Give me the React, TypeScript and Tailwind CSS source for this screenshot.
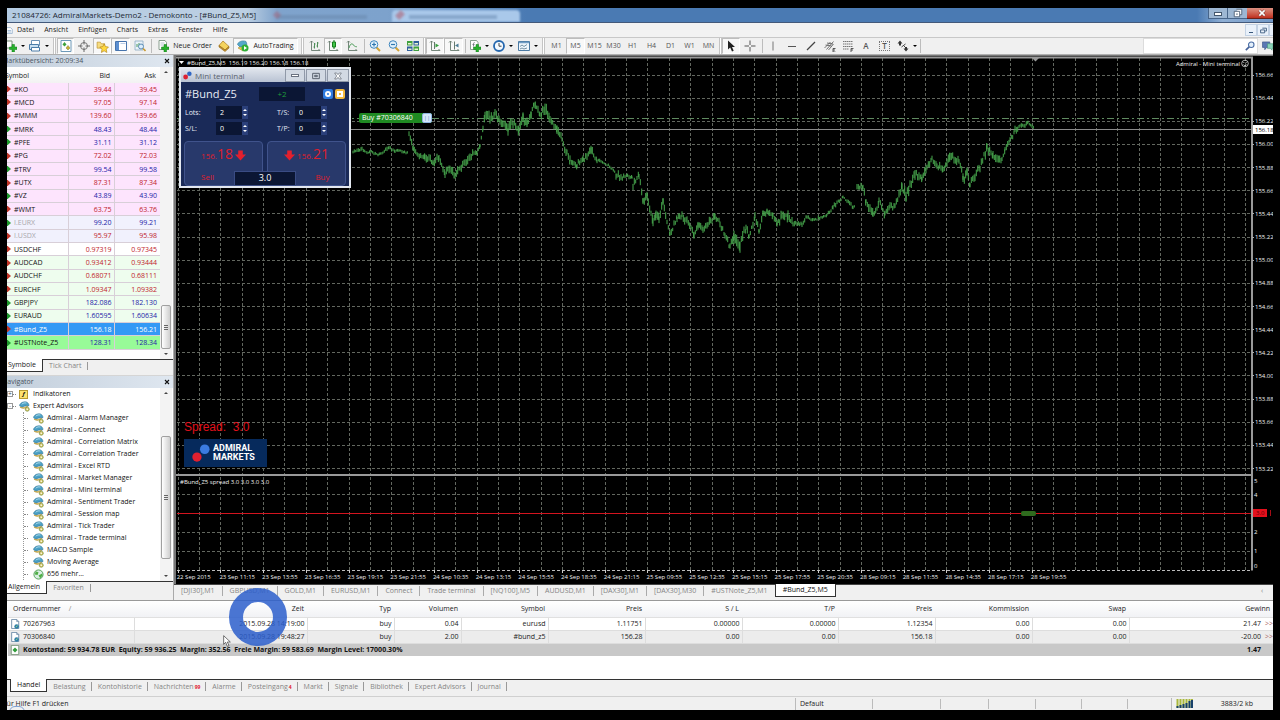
import type { ReactNode } from "react";
import clsx from "clsx";

type Quote = { name: string; bid: string; ask: string; up: boolean; bg: string; dim?: boolean };

const pink = "bg-[#fde4fd]";
const lilac = "bg-[#f1f1fd]";
const mint = "bg-[#eefdee]";

const quotes: Quote[] = [
	{ name: "#KO", bid: "39.44", ask: "39.45", up: false, bg: pink },
	{ name: "#MCD", bid: "97.05", ask: "97.14", up: false, bg: pink },
	{ name: "#MMM", bid: "139.60", ask: "139.66", up: false, bg: pink },
	{ name: "#MRK", bid: "48.43", ask: "48.44", up: true, bg: pink },
	{ name: "#PFE", bid: "31.11", ask: "31.12", up: true, bg: pink },
	{ name: "#PG", bid: "72.02", ask: "72.03", up: false, bg: pink },
	{ name: "#TRV", bid: "99.54", ask: "99.58", up: true, bg: pink },
	{ name: "#UTX", bid: "87.31", ask: "87.34", up: false, bg: pink },
	{ name: "#VZ", bid: "43.89", ask: "43.90", up: true, bg: pink },
	{ name: "#WMT", bid: "63.75", ask: "63.76", up: false, bg: pink },
	{ name: "I.EURX", bid: "99.20", ask: "99.21", up: true, bg: lilac, dim: true },
	{ name: "I.USDX", bid: "95.97", ask: "95.98", up: false, bg: lilac, dim: true },
	{ name: "USDCHF", bid: "0.97319", ask: "0.97345", up: false, bg: "bg-white" },
	{ name: "AUDCAD", bid: "0.93412", ask: "0.93444", up: false, bg: mint },
	{ name: "AUDCHF", bid: "0.68071", ask: "0.68111", up: false, bg: mint },
	{ name: "EURCHF", bid: "1.09347", ask: "1.09382", up: false, bg: mint },
	{ name: "GBPJPY", bid: "182.086", ask: "182.130", up: true, bg: mint },
	{ name: "EURAUD", bid: "1.60595", ask: "1.60634", up: true, bg: mint },
	{ name: "#Bund_Z5", bid: "156.18", ask: "156.21", up: false, bg: "bg-[#3399f5]" },
	{ name: "#USTNote_Z5", bid: "128.31", ask: "128.34", up: true, bg: "bg-[#98fb98]" },
];

const advisors = [
	"Admiral - Alarm Manager",
	"Admiral - Connect",
	"Admiral - Correlation Matrix",
	"Admiral - Correlation Trader",
	"Admiral - Excel RTD",
	"Admiral - Market Manager",
	"Admiral - Mini terminal",
	"Admiral - Sentiment Trader",
	"Admiral - Session map",
	"Admiral - Tick Trader",
	"Admiral - Trade terminal",
	"MACD Sample",
	"Moving Average",
];

const chartTabs = [
	"[DJI30],M1",
	"GBPUSD,M1",
	"GOLD,M1",
	"EURUSD,M1",
	"Connect",
	"Trade terminal",
	"[NQ100],M5",
	"AUDUSD,M1",
	"[DAX30],M1",
	"[DAX30],M30",
	"#USTNote_Z5,M1",
];

const terminalTabs = [
	{ label: "Belastung" },
	{ label: "Kontohistorie" },
	{ label: "Nachrichten", count: "99" },
	{ label: "Alarme" },
	{ label: "Posteingang", count: "4" },
	{ label: "Markt" },
	{ label: "Signale" },
	{ label: "Bibliothek" },
	{ label: "Expert Advisors" },
	{ label: "Journal" },
];

const orderCols = [
	{ label: "Ordernummer", w: "w-[126px]" },
	{ label: "Zeit", w: "w-[173px]" },
	{ label: "Typ", w: "w-[87px]" },
	{ label: "Volumen", w: "w-[67px]" },
	{ label: "Symbol", w: "w-[87px]" },
	{ label: "Preis", w: "w-[97px]" },
	{ label: "S / L", w: "w-[97px]" },
	{ label: "T/P", w: "w-[96px]" },
	{ label: "Preis", w: "w-[97px]" },
	{ label: "Kommission", w: "w-[97px]" },
	{ label: "Swap", w: "w-[97px]" },
	{ label: "Gewinn", w: "" },
];

const orders = [
	["70267963", "2015.09.28 14:19:00", "buy", "0.04", "eurusd", "1.11751", "0.00000", "0.00000", "1.12354", "0.00", "0.00", "21.47"],
	["70306840", "2015.09.28 19:48:27", "buy", "2.00", "#bund_z5", "156.28", "0.00", "0.00", "156.18", "0.00", "0.00", "-20.00"],
];

const prices = [
	"156.66", "156.44", "156.22", "156.00", "155.88", "155.66", "155.44", "155.22", "155.00",
	"154.88", "154.66", "154.44", "154.22", "154.00", "153.88", "153.66", "153.44", "153.22",
];

const dates = [
	"22 Sep 2015", "23 Sep 11:15", "23 Sep 13:55", "23 Sep 16:35", "23 Sep 19:15", "23 Sep 21:55",
	"24 Sep 10:35", "24 Sep 13:15", "24 Sep 15:55", "24 Sep 18:35", "24 Sep 21:15",
	"25 Sep 09:55", "25 Sep 12:35", "25 Sep 15:15", "25 Sep 17:55", "25 Sep 20:35",
	"28 Sep 09:15", "28 Sep 11:55", "28 Sep 14:35", "28 Sep 17:15", "28 Sep 19:55",
];

// [x, y, spread] turning points, one list for each trading session
const sessions: number[][][] = [
	[[353, 152, 2], [362, 149, 3], [367, 153, 2], [370, 151, 2], [378, 155, 2], [383, 153, 2], [389, 147, 3], [395, 152, 2], [398, 150, 2], [408, 153, 2]],
	[
		[409, 134, 3], [413, 146, 4], [418, 155, 4], [425, 157, 5], [433, 163, 5], [439, 158, 5], [445, 173, 5], [450, 168, 5], [455, 176, 5], [460, 168, 5],
		[465, 164, 5], [470, 156, 5], [477, 153, 3], [480, 145, 3], [483, 128, 3], [485, 114, 6], [490, 118, 6], [495, 113, 6], [500, 122, 5], [508, 129, 6],
		[513, 123, 6], [519, 132, 6], [523, 117, 7], [527, 123, 6], [531, 112, 6], [534, 104, 5], [540, 116, 5], [545, 108, 7], [550, 119, 6], [557, 130, 5],
		[562, 140, 5], [567, 153, 5], [570, 161, 5], [577, 165, 4], [583, 160, 4], [591, 150, 5], [597, 160, 3], [603, 162, 2], [612, 168, 2], [617, 176, 5],
		[632, 177, 2], [633, 184, 5], [639, 175, 4], [643, 202, 5], [647, 195, 5], [653, 223, 6], [656, 213, 6], [659, 218, 6], [663, 202, 5], [670, 234, 5],
		[677, 219, 4], [682, 215, 5], [687, 221, 5], [694, 234, 5], [698, 226, 5], [703, 232, 5], [708, 223, 5], [715, 216, 4], [720, 223, 4], [725, 235, 4],
		[730, 247, 5], [734, 237, 7], [740, 244, 8], [746, 227, 5], [749, 236, 4], [755, 217, 4], [759, 231, 4], [763, 215, 5], [767, 211, 4], [773, 214, 5],
		[777, 225, 4], [782, 215, 6], [788, 217, 6], [793, 222, 4], [802, 224, 3], [807, 217, 3], [813, 220, 2], [827, 215, 2], [833, 207, 3], [843, 197, 2],
		[853, 207, 3], [855, 204, 2],
	],
	[
		[857, 188, 5], [863, 187, 5], [866, 202, 5], [873, 215, 5], [879, 202, 5], [885, 214, 5], [890, 205, 5], [895, 207, 4], [902, 187, 6], [906, 196, 6],
		[915, 175, 6], [922, 177, 5], [927, 165, 5], [932, 158, 4], [937, 165, 4], [943, 170, 4], [950, 155, 6], [959, 162, 4], [963, 178, 6], [967, 174, 6],
		[970, 185, 5], [975, 176, 6], [980, 167, 5], [987, 148, 6], [993, 157, 5], [1002, 161, 4], [1005, 150, 4], [1010, 141, 4], [1015, 130, 5], [1020, 125, 3],
		[1025, 126, 3], [1028, 122, 2], [1034, 128, 2],
	],
];

const rand = (n: number) => {
	const v = Math.sin(n * 12.9898) * 43758.5453;
	return v - Math.floor(v);
};

function barPath(points: number[][]) {
	let d = "";
	for (let i = 0; i < points.length - 1; i++) {
		const [x0, y0, s0] = points[i];
		const [x1, y1, s1] = points[i + 1];
		for (let x = x0; x < x1; x += 1.33) {
			const t = (x - x0) / (x1 - x0);
			const s = s0 + (s1 - s0) * t;
			const mid = y0 + (y1 - y0) * t + (rand(x) - 0.5) * s * 0.9;
			const top = mid - s * (0.3 + rand(x + 7) * 0.6);
			const bottom = mid + s * (0.3 + rand(x + 3) * 0.6);
			d += `M${x.toFixed(1)} ${top.toFixed(1)}V${bottom.toFixed(1)}`;
		}
	}
	return d;
}

const colX = (i: number) => 177.7 + i * 21.353;
const rowY = (i: number) => 75 + i * 23.15;

function Svg({ children, className = "size-3" }: { children: ReactNode; className?: string }) {
	return (
		<svg viewBox="0 0 12 12" fill="none" className={clsx("shrink-0", className)} aria-hidden="true">
			{children}
		</svg>
	);
}

function Plus() {
	return <path d="M7 4.5h2.5V7H12v2.5H9.5V12H7V9.5H4.5V7H7z" fill="#27b12b" stroke="#10791a" strokeWidth=".5" />;
}

function Axes() {
	return <path d="M2.5 1v9.500h8.500M1 2.500l1.500-1.500L4 2.500M9.500 9l1.500 1.500" stroke="#667b6d" strokeWidth=".9" />;
}

function AdvisorIcon() {
	return (
		<Svg className="size-[11px]">
			<path d="M1 6.500C3 9 8 8.500 10 5L6 7z" fill="#e7c54a" stroke="#a5802a" strokeWidth=".5" />
			<path d="M.5 4.500C2 1 7 0 9 1.500s2 3 1.500 4C8 4.500 5 6 3.500 6.500 2 6 .5 5.500.5 4.500z" fill="#4a9fc4" stroke="#2b7196" strokeWidth=".6" />
			<path d="M3 3.500C4.500 2 6.500 1.700 8 2.300" stroke="#b8e2f1" />
			<circle cx="9" cy="9" r="2.200" fill="#d9c768" stroke="#6f8a3a" strokeWidth=".7" />
			<circle cx="9" cy="9" r=".8" fill="#fff" />
		</Svg>
	);
}

function DocIcon() {
	return (
		<Svg className="size-2.5">
			<path d="M2 .5h6l2.500 2.500v8.500H2z" fill="#fff" stroke="#5f7f9f" />
			<path d="M8 .5V3h2.500" stroke="#5f7f9f" strokeWidth=".8" />
			<circle cx="8" cy="9" r="2.800" fill="#2f7ea8" />
			<path d="M7 9.500L9 8" stroke="#a8e07b" />
		</Svg>
	);
}

function ToolButton({ label, width = "w-[18px]", active, menu, children }: { label: string; width?: string; active?: boolean; menu?: boolean; children: ReactNode }) {
	return (
		<button
			aria-label={label}
			className={clsx("flex h-4 shrink-0 items-center justify-center gap-1 whitespace-nowrap", width, active && "border border-[#bdbdbd] border-r-white border-b-white bg-[#f8f8f8]")}
		>
			{children}
			{menu && <span className="size-0 border-x-2 border-t-2 border-x-transparent border-t-black" />}
		</button>
	);
}

function Sep({ width = "w-1" }: { width?: string }) {
	return (
		<span className={clsx("flex h-3.5 shrink-0 justify-center", width)}>
			<span className="border-l border-[#bcbcbc]" />
		</span>
	);
}

function Grip({ width = "w-1.5" }: { width?: string }) {
	return (
		<span className={clsx("flex h-4 shrink-0 justify-center", width)}>
			<span className="w-[3px] border-x border-[#c4c4c4] bg-white" />
		</span>
	);
}

function TitleBar() {
	return (
		<header className="relative flex h-3.5 shrink-0 items-center overflow-hidden bg-[linear-gradient(90deg,#b4cbe2_0px,#bccfe2_240px,#7fa3cc_270px,#7da2cc_380px,#4a7ab3_520px,#4a7ab3_94%,#8fafd4_96%,#6f97c6_100%)]">
			<div className="absolute left-[385px] top-0.5 h-3 w-[128px] rounded-t bg-[#a9c8ea] blur-[1px]" />
			<div className="absolute left-[402px] top-[7px] h-1 w-[88px] bg-[#7292b8] opacity-60 blur-[1px]" />
			<div className="absolute left-[270px] top-[7px] h-1 w-[90px] bg-[#6886aa] opacity-50 blur-[1px]" />
			<div className="absolute left-[389px] top-[4px] h-1.5 w-2 -rotate-45 bg-[#b0505f] opacity-50 blur-[1px]" />
			<div className="absolute left-[267px] top-[4px] h-1.5 w-1.5 -rotate-45 bg-[#b0505f] opacity-40 blur-[1px]" />
			<h1 className="relative pl-[5px] text-[8px] leading-[14px] text-[#1c2733]">21084726: AdmiralMarkets-Demo2 - Demokonto - [#Bund_Z5,M5]</h1>
			<div className="relative ml-auto flex h-[11px] self-start">
				<button aria-label="Minimieren" className="flex w-5 items-end justify-center border border-t-0 border-[#47658a] bg-[#9db7d3] pb-0.5">
					<span className="h-1 w-2 border border-[#44576d] bg-white" />
				</button>
				<button aria-label="Verkleinern" className="flex w-[19px] items-center justify-center border-b border-[#47658a] bg-[#9db7d3]">
					<Svg className="size-2.5">
						<path d="M4 1.500h6.500V8H8.500M1.500 4h6.500v6.500H1.500z" fill="#fff" stroke="#44576d" />
						<path d="M4 6.500h1.500V8H4z" fill="#44576d" />
					</Svg>
				</button>
				<button aria-label="Schließen" className="flex w-[26px] items-center justify-center border-b border-[#6b2219] bg-linear-to-b from-[#dc9081] to-[#be2c1c] pl-1">
					<Svg className="size-2">
						<path d="M2 2l8 8M10 2l-8 8" stroke="#6a2a25" strokeWidth="4" />
						<path d="M2 2l8 8M10 2l-8 8" stroke="#fff" strokeWidth="2.500" />
					</Svg>
				</button>
			</div>
		</header>
	);
}

function MenuBar() {
	return (
		<nav className="flex h-[15px] shrink-0 items-center gap-2.5 border-t border-[#43597a] bg-[#f2f2f2]">
			<Svg className="-mr-[7px] size-[7px]">
				<path d="M0 1h6l3 3v7H0" stroke="#6c94bd" fill="#fff" />
				<path d="M1 6h6M1 8.500h6" stroke="#6c94bd" />
			</Svg>
			{["Datei", "Ansicht", "Einfügen", "Charts", "Extras", "Fenster", "Hilfe"].map((m) => (
				<button key={m} className="leading-[14px]">
					{m}
				</button>
			))}
			<div className="ml-auto flex h-3">
				<button aria-label="Fenster minimieren" className="flex w-3 items-end justify-center border border-[#c3d2e4] bg-[#e9f1fa] pb-0.5">
					<span className="w-1 border-b border-[#38587c]" />
				</button>
				<button aria-label="Fenster verkleinern" className="flex w-3 items-center justify-center border border-[#c3d2e4] bg-[#e9f1fa]">
					<Svg className="size-[7px]">
						<path d="M4 2h7v5H9M1 5h7v5H1z" stroke="#38587c" strokeWidth="1.500" />
					</Svg>
				</button>
				<span className="w-1 border border-r-0 border-[#c3d2e4] bg-[#e9f1fa]" />
			</div>
		</nav>
	);
}

function ToolBar() {
	return (
		<div className="flex h-[18px] shrink-0 items-center overflow-hidden border-y border-t-[#c8c8c8] border-b-[#b0b0b0] bg-[#f0f0f0]">
			<ToolButton label="Neuer Chart" width="w-5" menu>
				<Svg className="-ml-1 size-3">
					<path d="M1 1h6v7H1z" fill="#fff" stroke="#7a8f7a" />
					<Plus />
				</Svg>
			</ToolButton>
			<ToolButton label="Profile" width="w-6" menu>
				<Svg>
					<path d="M2.500.5h8v5h-8z" fill="#fff" stroke="#6d93b6" />
					<path d="M.5 4.500h9v5h-9z" fill="#c9e0f1" stroke="#4c7da8" />
					<path d="M2.500 7.500h8v3.500h-8z" fill="#fff" stroke="#4c7da8" />
				</Svg>
			</ToolButton>
			<Grip />
			<ToolButton label="Marktübersicht" width="w-[17px]" active>
				<Svg>
					<path d="M1 .5h10v11H1z" fill="#fff" stroke="#6e9ab9" />
					<path d="M2.500 4.500L4.500 2l2 2.500-2 2z" fill="#3ca23c" />
					<path d="M6 8l2-2.500L10 8l-2 2z" fill="#d0aa33" stroke="#6d8a3c" strokeWidth=".5" />
				</Svg>
			</ToolButton>
			<ToolButton label="Datenfenster" width="w-[19px]">
				<Svg>
					<circle cx="6" cy="6" r="3.500" stroke="#777" />
					<path d="M6 0v4.500M6 7.500V12M0 6h4.500M7.500 6H12" stroke="#666" />
				</Svg>
			</ToolButton>
			<ToolButton label="Navigator" active>
				<Svg className="size-[13px]">
					<path d="M1 2h3l1 1.500h3v4H1z" fill="#f6dc80" stroke="#b98e28" strokeWidth=".6" />
					<path d="M7.500 3.500l1.200 2.600 2.800.4-2 2 .5 3-2.500-1.500L5 11.500l.5-3-2-2 2.800-.4z" fill="#ffd93f" stroke="#b1841c" strokeWidth=".6" />
				</Svg>
			</ToolButton>
			<ToolButton label="Terminal" width="w-[19px]" active>
				<Svg>
					<path d="M.5 1.500h11v9H.5z" fill="#fff" stroke="#4774ad" />
					<path d="M1 2h3v8H1z" fill="#5d8fd0" />
					<path d="M5.500 3.500h5" stroke="#b9cde6" />
				</Svg>
			</ToolButton>
			<ToolButton label="Strategie Tester" width="w-[19px]">
				<Svg>
					<path d="M1 1h8v9H1z" fill="#e9f2f9" stroke="#8cabc3" strokeWidth=".8" />
					<path d="M3 4v3M5 3v4" stroke="#4f9d5c" />
					<circle cx="7" cy="6.500" r="2.500" fill="#dcedfb" stroke="#5c8db6" />
					<path d="M9 8.500l2.500 2.500" stroke="#c89a32" strokeWidth="1.600" />
				</Svg>
			</ToolButton>
			<Sep width="w-[5px]" />
			<ToolButton label="Neue Order" width="w-[61px]">
				<Svg>
					<path d="M2 .5h6l1.500 2v7H2z" fill="#fff" stroke="#6f8a76" strokeWidth=".8" />
					<path d="M3.500 3h4M3.500 5h3" stroke="#9ab" strokeWidth=".7" />
					<Plus />
				</Svg>
				<span>Neue Order</span>
			</ToolButton>
			<ToolButton label="MetaEditor">
				<Svg>
					<path d="M1 5.500L5 1l6 5.500L7 10z" fill="#f4d35e" stroke="#a8791d" strokeWidth=".7" />
					<path d="M1 5.500v1.500l6 4.500 4-3.500V6.500L7 10z" fill="#c9962c" stroke="#8f6416" strokeWidth=".6" />
				</Svg>
			</ToolButton>
			<ToolButton label="AutoTrading" width="w-[65px]" active>
				<Svg>
					<path d="M1 8l5 3 5-4-4-3z" fill="#eac84d" stroke="#9e7a25" strokeWidth=".5" />
					<path d="M.5 4.500C1 1.500 6 0 9 1.500l1 3L3 7z" fill="#55a8c9" stroke="#2f7798" strokeWidth=".6" />
					<circle cx="8" cy="8" r="3.500" fill="#2db035" />
					<path d="M7 6v4l3-2z" fill="#fff" />
				</Svg>
				<span>AutoTrading</span>
			</ToolButton>
			<Grip width="w-2" />
			<ToolButton label="Balken">
				<Svg>
					<Axes />
					<path d="M5.500 3v5.500M4.500 7h1M5.500 4h1M8.500 2v5.500M7.500 6h1M8.500 3h1" stroke="#4f8f5a" />
				</Svg>
			</ToolButton>
			<ToolButton label="Kerzen" active>
				<Svg>
					<Axes />
					<path d="M7 0v9" stroke="#157d1c" />
					<path d="M5.500 2h3v5h-3z" fill="#43c649" stroke="#157d1c" />
				</Svg>
			</ToolButton>
			<ToolButton label="Linie" width="w-5">
				<Svg>
					<Axes />
					<path d="M3 8c1-4 3-5.500 4.500-3S10 6 11 7" stroke="#4f9d5c" />
				</Svg>
			</ToolButton>
			<Sep />
			<ToolButton label="Vergrößern">
				<Svg>
					<path d="M7.500 7.500l3.500 3.500" stroke="#d2a336" strokeWidth="2" />
					<circle cx="5" cy="4.500" r="3.800" fill="#dff0fb" stroke="#3f86bd" />
					<path d="M3 4.500h4M5 2.500v4" stroke="#2f77b0" strokeWidth="1.200" />
				</Svg>
			</ToolButton>
			<ToolButton label="Verkleinern" width="w-[19px]">
				<Svg>
					<path d="M7.500 7.500l3.500 3.500" stroke="#d2a336" strokeWidth="2" />
					<circle cx="5" cy="4.500" r="3.800" fill="#dff0fb" stroke="#3f86bd" />
					<path d="M3 4.500h4" stroke="#2f77b0" strokeWidth="1.200" />
				</Svg>
			</ToolButton>
			<ToolButton label="Fenster anordnen" width="w-[19px]">
				<Svg>
					<path d="M0 1h5.500v4.500H0zM6.500 6.500H12V11H6.500z" fill="#3fa03f" />
					<path d="M6.500 1H12v4.500H6.500zM0 6.500h5.500V11H0z" fill="#2e5f9b" />
					<path d="M1 3h3.500v1.500H1zM7.500 3H11v1.500H7.500zM1 8.500h3.500V10H1zM7.500 8.500H11V10H7.500z" fill="#e8f4d0" />
				</Svg>
			</ToolButton>
			<Grip width="w-1" />
			<ToolButton label="Automatisch scrollen" active>
				<Svg>
					<Axes />
					<path d="M5.500 2v7" stroke="#667b6d" />
					<path d="M6.500 3.500L10 5.500l-3.500 2z" fill="#36a13d" />
				</Svg>
			</ToolButton>
			<ToolButton label="Chart verschieben" width="w-[19px]" active>
				<Svg>
					<Axes />
					<path d="M6.500 1.500v8" stroke="#667b6d" />
					<path d="M10.500 3.500L7 5.500l3.500 2z" fill="#4b7d95" />
				</Svg>
			</ToolButton>
			<Sep />
			<ToolButton label="Indikatoren" width="w-[23px]" menu>
				<Svg>
					<path d="M1.500.5h6l1.500 2v7H1.500z" fill="#fff" stroke="#6f8a76" strokeWidth=".8" />
					<path d="M5.500 2.500c-1 0-1 1-1 4M3.500 4.500h2" stroke="#667" strokeWidth=".8" />
					<Plus />
				</Svg>
			</ToolButton>
			<ToolButton label="Zeitrahmen" width="w-[25px]" menu>
				<Svg>
					<circle cx="6" cy="6" r="5" fill="#f4faff" stroke="#2567ae" strokeWidth="1.800" />
					<path d="M6 3v3.200h2.500" stroke="#444" />
				</Svg>
			</ToolButton>
			<ToolButton label="Vorlagen" width="w-[25px]" menu>
				<Svg>
					<path d="M.5 1.500h11v9H.5z" fill="#eef6fc" stroke="#4b7aa3" />
					<path d="M1 2.500h10" stroke="#6f9cc4" strokeWidth="1.500" />
					<path d="M2 6.500l2-1.500 2 1.500 3-2M2 9l2-1 2 1 3-1" stroke="#55788f" strokeWidth=".8" />
				</Svg>
			</ToolButton>
			<Grip width="w-[7px]" />
			{["M1", "M5", "M15", "M30", "H1", "H4", "D1", "W1", "MN"].map((t) => (
				<ToolButton key={t} label={t} width="w-[19px]" active={t === "M5"}>
					<span className="text-[7px] text-[#555]">{t}</span>
				</ToolButton>
			))}
			<Grip width="w-1" />
			<ToolButton label="Zeiger" active>
				<Svg>
					<path d="M3 .5v9l2.200-2L7 11.500l1.700-.8L7 7h3z" fill="#222" />
				</Svg>
			</ToolButton>
			<ToolButton label="Fadenkreuz" width="w-5">
				<Svg>
					<path d="M6 .5v4.500M6 7v4.500M.5 6H5M7 6h4.500" stroke="#555" />
				</Svg>
			</ToolButton>
			<Sep />
			<ToolButton label="Vertikale Linie">
				<Svg>
					<path d="M6 1.500v9" stroke="#777" />
				</Svg>
			</ToolButton>
			<ToolButton label="Horizontale Linie" width="w-5">
				<Svg>
					<path d="M2 6.500h8" stroke="#555" />
				</Svg>
			</ToolButton>
			<ToolButton label="Trendlinie">
				<Svg>
					<path d="M2 10L10 2" stroke="#444" strokeWidth="1.200" />
				</Svg>
			</ToolButton>
			<ToolButton label="Äquidistanter Kanal" width="w-[19px]">
				<Svg>
					<path d="M.5 8l6-6M2.500 9.500l7-8M4.500 10l5-6M1.500 5l6 1M3 3l6 1" stroke="#555" strokeWidth=".8" />
					<path d="M11.500 8.500H9v3.500h2.500M9 10h2" stroke="#333" strokeWidth=".8" />
				</Svg>
			</ToolButton>
			<ToolButton label="Fibonacci">
				<Svg>
					<path d="M1 1.500h10M1 4h10M1 6.500h10M1 9h6" stroke="#777" strokeDasharray="1.500 .5" />
					<path d="M9 12V8.500h2.500M9 10h2" stroke="#333" strokeWidth=".8" />
				</Svg>
			</ToolButton>
			<ToolButton label="Text">
				<span className="text-[8px] font-semibold text-[#555]">A</span>
			</ToolButton>
			<ToolButton label="Beschriftung" width="w-[19px]">
				<span className="border border-dotted border-[#777] px-0.5 text-[8px] leading-[8px] font-semibold text-[#555]">T</span>
			</ToolButton>
			<ToolButton label="Pfeile" width="w-[25px]" menu>
				<Svg>
					<path d="M3 .5L5.500 3.500h-1.500v2H2V3.500H.5z" fill="#333" />
					<path d="M4.500 7l4-3M6.500 5.500L8 7" stroke="#444" />
					<path d="M9 11.500L6.500 8.500H8v-1.500h2v1.500h1.500z" fill="#333" />
				</Svg>
			</ToolButton>
			<Sep width="w-0.5" />
			<div className="ml-auto flex h-4 w-[115px] items-center border border-[#dcdcdc] bg-white">
				<input type="search" aria-label="Suche" className="w-0 flex-1 outline-none" />
				<Svg className="mr-0.5 size-2.5">
					<circle cx="7.500" cy="4.500" r="3.300" fill="#e4f0fb" stroke="#4b6ea5" strokeWidth="1.300" />
					<path d="M5 7l-4 4" stroke="#46639a" strokeWidth="2" />
				</Svg>
			</div>
			<button aria-label="Community" className="flex w-[15px] justify-end overflow-hidden pl-1">
				<Svg className="size-[11px]">
					<path d="M.5 1h8v6H5L3 9.500V7H.5z" fill="#5b78b4" stroke="#3c5488" strokeWidth=".7" />
					<path d="M6 3h6v5h-1v2L9 8H6z" fill="#8cd3b8" stroke="#4a9a7c" strokeWidth=".7" />
				</Svg>
			</button>
		</div>
	);
}

function PanelTitle({ children }: { children: ReactNode }) {
	return (
		<div className="flex h-3 shrink-0 items-center justify-between overflow-hidden bg-linear-to-r from-[#c3cfdc] to-[#dfe7f0] text-[#4a5561]">
			<h2 className="-ml-[5px] leading-3">{children}</h2>
			<button aria-label="Bereich schließen" className="px-[3px]">
				<Svg className="size-[6px]">
					<path d="M2 2l8 8M10 2l-8 8" stroke="#111" strokeWidth="2.200" />
				</Svg>
			</button>
		</div>
	);
}

function Scrollbar({ before, thumb }: { before: string; thumb: string }) {
	return (
		<div className="mr-px flex w-3 shrink-0 flex-col items-center bg-[#f3f3f3] py-1">
			<span className="size-0 border-x-2 border-b-2 border-x-transparent border-b-[#444]" />
			<span className={before} />
			<span className={clsx("flex w-2.5 flex-col items-center justify-center gap-px rounded-xs border border-[#a0a0a0] bg-linear-to-r from-white to-[#cfcfcf]", thumb)}>
				<i className="w-1 border-b border-[#666]" />
				<i className="w-1 border-b border-[#666]" />
				<i className="w-1 border-b border-[#666]" />
			</span>
			<span className="mt-auto size-0 border-x-2 border-t-2 border-x-transparent border-t-[#444]" />
		</div>
	);
}

function PanelTabs({ active, other }: { active: string; other: string }) {
	return (
		<div className="flex h-[13px] shrink-0 border-t border-[#333] bg-[#f0f0f0]">
			<button className="-mt-px border-r border-b border-[#333] bg-white pr-1.5 pl-px leading-3">{active}</button>
			<button className="px-1.5 leading-3 text-[#858585]">{other}</button>
			<span className="my-0.5 border-l border-[#999]" />
		</div>
	);
}

function MarketWatch() {
	return (
		<section className="flex h-[317px] shrink-0 flex-col">
			<PanelTitle>Marktübersicht: 20:09:34</PanelTitle>
			<div className="flex flex-1 bg-white">
				<div className="flex-1 overflow-hidden">
					<table className="h-[283px] w-full table-fixed border-collapse leading-[11px]">
						<thead>
							<tr className="h-4 bg-linear-to-b from-white to-[#f2f2f2]">
								<th className="w-[61px] text-left font-normal">
									<span className="-ml-0.5">Symbol</span>
								</th>
								<th className="w-[46px] pr-1 text-right font-normal">Bid</th>
								<th className="pr-1 text-right font-normal">Ask</th>
							</tr>
						</thead>
						<tbody>
							{quotes.map((q) => {
								const picked = q.name === "#Bund_Z5";
								const tone = picked ? "text-white" : q.up ? "text-[#2222a8]" : "text-[#c01c2c]";
								return (
									<tr key={q.name} className={clsx("border-b border-[#d8cfd8]", q.bg)}>
										<td className={clsx("border-r border-[#d8cfd8] p-0", picked ? "text-white" : q.dim ? "text-[#a8a8ac]" : "text-[#111]")}>
											<span className="flex items-center gap-[3px]">
												<Svg className="h-2 w-1">
													{q.up ? <path d="M0 -3h2l10 9-10 9H0z" fill="#1e9a2c" /> : <path d="M0 -3h2l10 9-10 9H0z" fill="#c23527" />}
												</Svg>
												{q.name}
											</span>
										</td>
										<td className={clsx("border-r border-[#d8cfd8] p-0 pr-0.5 text-right", tone)}>{q.bid}</td>
										<td className={clsx("p-0 pr-[3px] text-right", tone)}>{q.ask}</td>
									</tr>
								);
							})}
						</tbody>
					</table>
				</div>
				<Scrollbar before="flex-1" thumb="mb-1 h-11" />
			</div>
			<PanelTabs active="Symbole" other="Tick Chart" />
		</section>
	);
}

function Navigator() {
	return (
		<section className="mt-[3px] flex min-h-0 flex-1 flex-col border-t border-[#d5d5d5]">
			<PanelTitle>Navigator</PanelTitle>
			<div className="flex min-h-0 flex-1 bg-white">
				<ul className="flex-1 overflow-hidden leading-3 text-[#111]">
					<li className="flex h-3 items-center gap-[3px]">
						<span className="flex size-1.5 items-center justify-center border border-[#999] text-[6px] leading-none text-[#444]">+</span>
						<i className="-ml-1 w-1 border-b border-dotted border-[#888]" />
						<span className="flex size-[9px] items-center justify-center border border-[#b99a2f] bg-[#ffe36e] text-[6px] font-bold italic">f</span>
						<span className="pl-0.5">Indikatoren</span>
					</li>
					<li>
						<div className="flex h-3 items-center gap-[3px]">
							<span className="flex size-1.5 items-center justify-center border border-[#999] text-[6px] leading-none text-[#444]">-</span>
							<i className="-ml-1 w-1 border-b border-dotted border-[#888]" />
							<AdvisorIcon />
							<span>Expert Advisors</span>
						</div>
						<ul className="ml-4 border-l border-dotted border-[#999]">
							{advisors.map((a) => (
								<li key={a} className="flex h-3 items-center gap-[3px]">
									<i className="mr-0.5 w-1 border-b border-dotted border-[#888]" />
									<AdvisorIcon />
									<span className="whitespace-nowrap">{a}</span>
								</li>
							))}
							<li className="flex h-3 items-center gap-[3px]">
								<i className="mr-0.5 w-1 border-b border-dotted border-[#888]" />
								<Svg className="size-[11px]">
									<circle cx="6" cy="6" r="5" fill="#d9efe2" stroke="#4a9b50" />
									<path d="M3 2.500l3 1-1 3-3-.5zM6 7l4-2 .5 2-2.500 3z" fill="#4fae45" />
								</Svg>
								<span>656 mehr...</span>
							</li>
						</ul>
					</li>
				</ul>
				<Scrollbar before="h-[42px]" thumb="h-[123px]" />
			</div>
			<PanelTabs active="Allgemein" other="Favoriten" />
		</section>
	);
}

function Spinner({ label, value, labelWidth }: { label: string; value: string; labelWidth: string }) {
	return (
		<label className="flex h-[13px] items-center">
			<span className={labelWidth}>{label}</span>
			<input defaultValue={value} className="h-full w-[26px] bg-[#0b1634] pl-1 text-white outline-none" />
			<span className="flex h-full w-1.5 flex-col items-center justify-evenly bg-[#2b407b]">
				<i className="size-0 border-x-2 border-b-2 border-x-transparent border-b-white" />
				<i className="size-0 border-x-2 border-t-2 border-x-transparent border-t-white" />
			</span>
		</label>
	);
}

function DownArrow() {
	return (
		<Svg className="size-[11px]">
			<path d="M3.500.5h5V5H12l-6 6.500L0 5h3.500z" fill="#e3202e" />
		</Svg>
	);
}

function MiniTerminal() {
	return (
		<section className="absolute top-[11px] left-[3px] flex h-[121px] w-[172px] flex-col border-2 border-[#e3e8f0] bg-[#1a2a58] text-[8px] text-[#e8ecf6]">
			<div className="flex h-[13px] shrink-0 items-center bg-linear-to-b from-[#dfe4ec] to-[#b9c3d3] pl-0.5">
				<Svg className="size-[9px]">
					<circle cx="8.500" cy="3.500" r="3" fill="#2f66c4" />
					<circle cx="3.500" cy="8" r="3.200" fill="#dd2233" />
				</Svg>
				<h2 className="pl-[3px] text-[8px] leading-3 text-[#5a626e]">Mini terminal</h2>
				<div className="ml-auto flex h-full gap-px">
					<button aria-label="Minimieren" className="flex w-5 items-center justify-center border border-[#9099a8] bg-[#d2d9e3]">
						<i className="h-[3px] w-2 border border-[#6a7280] bg-white" />
					</button>
					<button aria-label="Maximieren" className="flex w-5 items-center justify-center border border-[#9099a8] bg-[#d2d9e3]">
						<Svg className="size-2">
							<path d="M1 2h10v8H1zM4 5h4v2H4z" stroke="#5a626e" strokeWidth="1.500" />
						</Svg>
					</button>
					<button aria-label="Mini terminal schließen" className="flex w-[22px] items-center justify-center border border-[#9099a8] bg-[#d2d9e3]">
						<Svg className="size-2">
							<path d="M1 1.500h3l2 2.500 2-2.500h3L8 6l3 4.500H8L6 8l-2 2.500H1L4 6z" fill="#fff" stroke="#5a626e" />
						</Svg>
					</button>
				</div>
			</div>
			<div className="flex items-center px-1 pt-1">
				<span className="w-[74px] text-[11px] leading-4">#Bund_Z5</span>
				<span className="h-3.5 w-[46px] bg-[#0b1634] text-center leading-[14px] text-[#1f9d3a]">+2</span>
				<button aria-label="Einstellungen" className="ml-auto flex size-2.5 items-center justify-center rounded-xs bg-[#2f7be0]">
					<i className="size-1.5 rounded-full border-2 border-white" />
				</button>
				<button aria-label="Ansicht" className="ml-0.5 flex size-2.5 items-center justify-center rounded-xs bg-[#f3b93c]">
					<i className="size-1.5 border-2 border-white" />
				</button>
			</div>
			<div className="grid grid-cols-[92px_1fr] gap-y-[3px] px-1 pt-1 text-[7px]">
				<Spinner label="Lots:" value="2" labelWidth="w-[31px]" />
				<Spinner label="T/S:" value="0" labelWidth="w-[18px]" />
				<Spinner label="S/L:" value="0" labelWidth="w-[31px]" />
				<Spinner label="T/P:" value="0" labelWidth="w-[18px]" />
			</div>
			<div className="relative mx-[3px] mt-1.5 flex flex-1 gap-1 text-[#df1f2e]">
				<button className="flex flex-1 flex-col items-center justify-between rounded border border-[#40538c] bg-[#28396b] pb-0.5">
					<span className="flex items-center gap-0.5 pt-1 leading-4">
						<span className="text-[8px]">156.<span className="text-[14px]">18</span></span>
						<DownArrow />
					</span>
					<span className="pr-8 leading-3">Sell</span>
				</button>
				<button className="flex flex-1 flex-col items-center justify-between rounded border border-[#40538c] bg-[#28396b] pb-0.5">
					<span className="flex items-center gap-0.5 pt-1 leading-4">
						<DownArrow />
						<span className="text-[8px]">156.<span className="text-[14px]">21</span></span>
					</span>
					<span className="pl-8 leading-3">Buy</span>
				</button>
				<output className="absolute inset-x-0 bottom-0 mx-auto h-[15px] w-[62px] border border-[#3a4c84] bg-[#0b1634] text-center text-[9px] leading-3 text-white">3.0</output>
			</div>
		</section>
	);
}

function Chart() {
	return (
		<div className="relative min-h-0 flex-1 overflow-hidden border-t border-l-2 border-[#777] bg-black">
			<svg viewBox="176 56 1097 528" preserveAspectRatio="xMinYMin slice" className="size-full" fontSize="6" role="img" aria-label="#Bund_Z5 M5">
				<g stroke="#62675f" strokeWidth="1" strokeDasharray="3 2">
					{Array.from({ length: 51 }, (_, i) => (
						<path key={i} d={`M${Math.round(colX(i)) + 0.5} 58V474M${Math.round(colX(i)) + 0.5} 477V570`} />
					))}
					{prices.map((p, i) => (
						<path key={p} d={`M177 ${Math.floor(rowY(i)) + 0.5}H1251`} />
					))}
					{[494, 532, 551].map((y) => (
						<path key={y} d={`M177 ${y}.5H1251`} />
					))}
				</g>
				<path d="M177 118.500H1251" stroke="#5f8a60" strokeDasharray="7 3 2 3" />
				<path d="M177 129.500H1251" stroke="#8b8b8b" />
				{sessions.map((s, i) => (
					<path key={i} d={barPath(s)} stroke="#48a94e" strokeWidth="1" />
				))}
				<path d="M177 513.500H1251" stroke="#d4141f" />
				<rect x="1021" y="511" width="15" height="5" rx="2" fill="#2f6b1e" />
				<path d="M176 57.500H1252V570.500" stroke="#9a9a9a" fill="none" strokeWidth="2" />
				<path d="M176 475H1252" stroke="#9a9a9a" strokeWidth="2" />
				<path d="M177 570.500H1252" stroke="#bbb" strokeDasharray="3 2" />
				<path d="M1032 58h7l-3.500 3.500z" fill="#999" />
				<path d="M179 61h5l-2.500 3z" fill="#fff" />
				<g fill="#f0f0f0">
					<text x="187" y="65" xmlSpace="preserve">#Bund_Z5,M5  156.19 156.20 156.18 156.18</text>
					<text x="1240" y="66" textAnchor="end">Admiral - Mini terminal</text>
					<text x="180" y="484">#Bund_Z5 spread 3.0 3.0 3.0 3.0</text>
					{prices.map((p, i) => (
						<text key={p} x="1255" y={rowY(i) + 2}>{p}</text>
					))}
					{[["5", 483], ["4", 497], ["2", 534], ["1", 553], ["0", 568]].map(([t, y]) => (
						<text key={t} x="1254" y={y}>{t}</text>
					))}
					{dates.map((d, i) => (
						<text key={d} x={colX(i * 2) - 1} y="579">{d}</text>
					))}
				</g>
				<path d={dates.map((_, i) => `M${Math.round(colX(i * 2)) + 0.5} 570v3`).join("")} stroke="#ccc" />
				<path d={prices.map((_, i) => `M1252 ${Math.floor(rowY(i)) + 0.5}h2`).join("")} stroke="#aaa" />
				<g stroke="#ddd" fill="none" strokeWidth=".8">
					<circle cx="1245" cy="63.500" r="3.300" />
					<path d="M1243.300 64.500c1 1.500 2.400 1.500 3.400 0M1243.800 62v1M1246.200 62v1" />
				</g>
				<rect x="1253" y="125" width="20" height="9" fill="#fff" />
				<text x="1255" y="132" fill="#000">156.18</text>
				<rect x="1253" y="509" width="14" height="8" fill="#e3101c" />
				<rect x="1270" y="510" width="1" height="6" fill="#a50d16" />
				<text x="1256" y="515" fill="#5c0006">3.0</text>
			</svg>
			<button className="absolute top-[57px] left-[183px] flex h-2.5 w-[73px] items-center justify-between rounded-xs bg-[#1f8a22] pl-[3px] text-[7px] leading-[10px] text-white">
				<span>Buy #70306840</span>
				<span className="h-2.5 w-2.5 rounded-xs border border-[#8fb4e0] bg-[#d5e6fa] text-center text-[6px] leading-2 text-[#5d87c4]">||</span>
			</button>
			<MiniTerminal />
			<div className="absolute top-[363px] left-2">
				<p className="font-['Liberation_Sans',sans-serif] text-[12px] leading-4 whitespace-pre text-[#e0101c]">Spread:  3.0</p>
				<div className="mt-1 flex h-7 w-[83px] items-center gap-[3px] bg-[#062a5c] pl-2">
					<Svg className="size-[18px]">
						<circle cx="8.500" cy="3.500" r="3.200" fill="#3b7be0" />
						<circle cx="3.300" cy="8.700" r="3.100" fill="#e0202f" />
					</Svg>
					<p className="font-['Roboto',sans-serif] text-[9px] leading-[9px] font-bold text-white">
						<span className="block">ADMIRAL</span>
						<span className="block">MARKETS</span>
					</p>
				</div>
			</div>
		</div>
	);
}

function ChartTabs() {
	return (
		<div className="flex h-4 shrink-0 items-start border-t border-[#444] bg-[#f0f0f0] leading-3 text-[#858585]">
			{chartTabs.map((t, i) => (
				<button key={t} className={clsx("my-px px-[7px] leading-[10px] whitespace-nowrap", i < chartTabs.length - 1 && "border-r border-[#aaa]")}>
					{t}
				</button>
			))}
			<button className="-mt-px h-[13px] border border-t-0 border-[#333] bg-white px-[7px] whitespace-nowrap text-[#111]">#Bund_Z5,M5</button>
			<button aria-label="Zurück" className="ml-auto px-2.5">‹</button>
		</div>
	);
}

function Terminal() {
	return (
		<section className="relative shrink-0 border-t border-[#999] bg-white pl-px">
			<table className="w-full table-fixed border-collapse leading-3 text-[#222]">
				<thead>
					<tr className="h-4 bg-linear-to-b from-white to-[#f1f2f5]">
						{orderCols.map((c, i) => (
							<th key={i} className={clsx("overflow-hidden border-b border-[#e0e0e0] p-0 font-normal whitespace-nowrap", c.w, i === 0 ? "pl-[5px] text-left" : "pr-[3px] text-right", i === 11 && "pr-0")}>
								{c.label}
								{i === 0 && <span className="pl-2 text-[#888]">/</span>}
							</th>
						))}
					</tr>
				</thead>
				<tbody>
					{orders.map((o, r) => (
						<tr key={o[0]} className={clsx("h-[13px] border-b border-[#ddd]", r === 1 && "bg-[#ececec]")}>
							{o.map((v, i) => (
								<td key={i} className={clsx("p-0", i < 11 && "border-r border-[#ddd]", i > 0 && i < 11 && "pr-0.5 text-right")}>
									{i === 0 ? (
										<span className="flex items-center gap-[3px] pl-0.5">
											<DocIcon />
											{v}
										</span>
									) : i === 11 ? (
										<span className="flex justify-end">
											{v}
											<span className="w-3 pl-1 text-[#a66]">&gt;&gt;</span>
										</span>
									) : (
										v
									)}
								</td>
							))}
						</tr>
					))}
					<tr className="h-[13px] bg-[#c8c8c8] font-bold text-[#111]">
						<td colSpan={11} className="p-0">
							<span className="flex items-center gap-[3px] pl-0.5 whitespace-pre">
								<Svg className="size-2.5">
									<path d="M1.500.5h9v11h-9z" fill="#fff" stroke="#6f8f6f" />
									<path d="M6 3l3 3-3 3-3-3z" fill="#2f9c38" />
								</Svg>
								Kontostand: 59 934.78 EUR  Equity: 59 936.25  Margin: 352.56  Freie Margin: 59 583.69  Margin Level: 17000.30%
							</span>
						</td>
						<td className="p-0 pr-3 text-right">1.47</td>
					</tr>
				</tbody>
			</table>
			<div className="h-[23px]" />
			<div className="absolute top-[-13px] left-[222px] size-[58px] rounded-full border-[14px] border-[#2c5ecb]/85" />
			<svg viewBox="0 0 12 18" className="absolute top-[34px] left-[216px] h-3 w-2" aria-hidden="true">
				<path d="M1 1v13l3-3 2.500 6 2.500-1-2.500-5.500H11z" fill="#fff" stroke="#333" />
			</svg>
		</section>
	);
}

function TerminalTabs() {
	return (
		<div className="flex h-[17px] shrink-0 items-start border-t border-[#333] bg-[#f0f0f0] pl-[3px] text-[#858585]">
			<button className="-mt-px h-[13px] border border-t-0 border-[#333] bg-white px-1.5 leading-3 text-[#111]">Handel</button>
			{terminalTabs.map((t) => (
				<button key={t.label} className="my-0.5 border-r border-[#999] pr-[5px] pl-1.5 leading-[9px] whitespace-nowrap">
					{t.label}
					{t.count && <sub className="bottom-0 pl-px text-[5px] font-bold text-[#e02030]">{t.count}</sub>}
				</button>
			))}
		</div>
	);
}

function StatusBar() {
	return (
		<footer className="relative flex h-[14px] shrink-0 items-center overflow-hidden border-t border-[#d0d0d0] bg-[#f0f0f0] leading-3 text-[#222]">
			<span className="-ml-1 flex-1">Für Hilfe F1 drücken</span>
			<span className="w-[77px] border-l border-[#bbb] pl-1">Default</span>
			<span className="h-2.5 w-[68px] border-l border-[#bbb]" />
			<span className="h-2.5 w-12 border-l border-[#bbb]" />
			<span className="h-2.5 w-[47px] border-l border-[#bbb]" />
			<span className="h-2.5 w-[46px] border-l border-[#bbb]" />
			<span className="h-2.5 w-[46px] border-l border-[#bbb]" />
			<span className="h-2.5 w-11 border-l border-[#bbb]" />
			<span className="flex w-[102px] items-center justify-between border-l border-[#bbb] pr-5 pl-1">
				<svg viewBox="0 0 17 9" className="h-[9px] w-[17px]" aria-hidden="true">
					<path d="M1.500 0v9M4.500 0v9M7.500 0v9M10.500 0v9M13.500 0v9M16 0v9" stroke="#a9b83a" strokeWidth="2" />
					<path d="M1.500 7v2M4.500 6v3M7.500 5v4M10.500 4v5M13.500 2v7M16 1v8" stroke="#17406a" strokeWidth="2" />
				</svg>
				<span>3883/2 kb</span>
			</span>
			<span className="absolute top-[9px] left-0.5 h-3 w-4 rounded-full border border-[#7fa3d6]" />
		</footer>
	);
}

export default function App() {
	return (
		<div className="h-screen bg-black px-[7px] pt-2 pb-2.5 font-['Open_Sans','Noto_Sans',sans-serif] text-[7px] leading-3 text-[#222]">
			<div className="flex h-full flex-col overflow-hidden bg-[#f0f0f0]">
				<TitleBar />
				<MenuBar />
				<ToolBar />
				<main className="flex min-h-0 flex-1">
					<aside className="flex w-[167px] shrink-0 flex-col border-r border-[#aaa] pb-1.5">
						<MarketWatch />
						<Navigator />
					</aside>
					<div className="flex min-w-0 flex-1 flex-col">
						<Chart />
						<ChartTabs />
					</div>
				</main>
				<Terminal />
				<TerminalTabs />
				<StatusBar />
			</div>
		</div>
	);
}
